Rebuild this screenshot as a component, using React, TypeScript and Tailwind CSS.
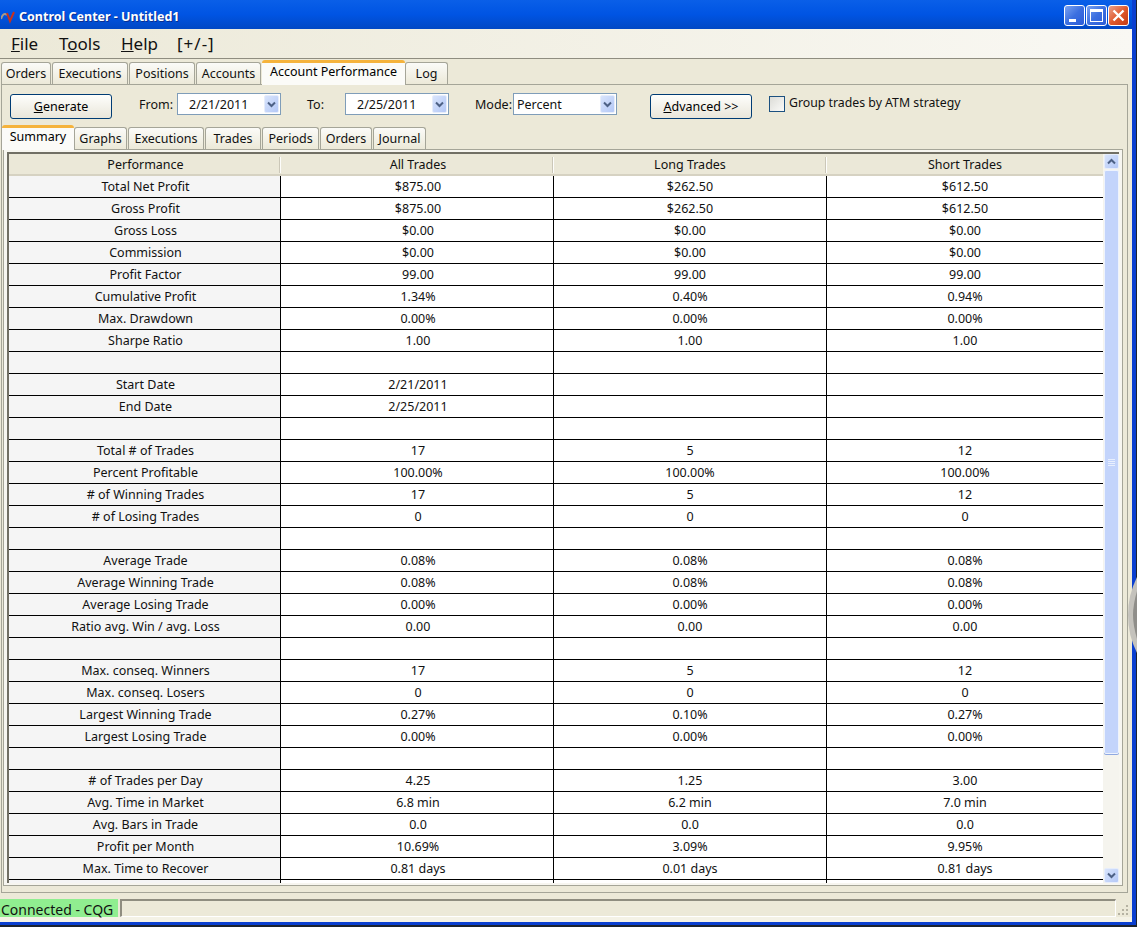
import React from 'react';

const font = 'font-[family-name:"Liberation_Sans",Arial,sans-serif]';

type Row = [string, string, string, string];

const rows: Row[] = [
  ['Total Net Profit', '$875.00', '$262.50', '$612.50'],
  ['Gross Profit', '$875.00', '$262.50', '$612.50'],
  ['Gross Loss', '$0.00', '$0.00', '$0.00'],
  ['Commission', '$0.00', '$0.00', '$0.00'],
  ['Profit Factor', '99.00', '99.00', '99.00'],
  ['Cumulative Profit', '1.34%', '0.40%', '0.94%'],
  ['Max. Drawdown', '0.00%', '0.00%', '0.00%'],
  ['Sharpe Ratio', '1.00', '1.00', '1.00'],
  ['', '', '', ''],
  ['Start Date', '2/21/2011', '', ''],
  ['End Date', '2/25/2011', '', ''],
  ['', '', '', ''],
  ['Total # of Trades', '17', '5', '12'],
  ['Percent Profitable', '100.00%', '100.00%', '100.00%'],
  ['# of Winning Trades', '17', '5', '12'],
  ['# of Losing Trades', '0', '0', '0'],
  ['', '', '', ''],
  ['Average Trade', '0.08%', '0.08%', '0.08%'],
  ['Average Winning Trade', '0.08%', '0.08%', '0.08%'],
  ['Average Losing Trade', '0.00%', '0.00%', '0.00%'],
  ['Ratio avg. Win / avg. Loss', '0.00', '0.00', '0.00'],
  ['', '', '', ''],
  ['Max. conseq. Winners', '17', '5', '12'],
  ['Max. conseq. Losers', '0', '0', '0'],
  ['Largest Winning Trade', '0.27%', '0.10%', '0.27%'],
  ['Largest Losing Trade', '0.00%', '0.00%', '0.00%'],
  ['', '', '', ''],
  ['# of Trades per Day', '4.25', '1.25', '3.00'],
  ['Avg. Time in Market', '6.8 min', '6.2 min', '7.0 min'],
  ['Avg. Bars in Trade', '0.0', '0.0', '0.0'],
  ['Profit per Month', '10.69%', '3.09%', '9.95%'],
  ['Max. Time to Recover', '0.81 days', '0.01 days', '0.81 days'],
];

const mainTabs = [
  { label: 'Orders', w: 'w-[51px]' },
  { label: 'Executions', w: 'w-[77px]' },
  { label: 'Positions', w: 'w-[67px]' },
  { label: 'Accounts', w: 'w-[66px]' },
  { label: 'Account Performance', w: 'w-[143px]', active: true },
  { label: 'Log', w: 'w-[44px]' },
];

const subTabs = [
  { label: 'Summary', w: 'w-[72px]', active: true },
  { label: 'Graphs', w: 'w-[54px]' },
  { label: 'Executions', w: 'w-[77px]' },
  { label: 'Trades', w: 'w-[57px]' },
  { label: 'Periods', w: 'w-[58px]' },
  { label: 'Orders', w: 'w-[53px]' },
  { label: 'Journal', w: 'w-[54px]' },
];

function Chevron({ up = false }: { up?: boolean }) {
  return (
    <svg width="9" height="7" viewBox="0 0 9 7" className={up ? 'rotate-180' : ''}>
      <path d="M1 1.5 L4.5 5 L8 1.5" fill="none" stroke="#4d6185" strokeWidth="2" />
    </svg>
  );
}

function ArrowBox({ className = '', up = false }: { className?: string; up?: boolean }) {
  return (
    <div className={`flex items-center justify-center rounded-[2px] border border-[#e6edfb] bg-gradient-to-br from-[#d8e4fc] to-[#b4c8f6] ${className}`}>
      <Chevron up={up} />
    </div>
  );
}

function Tab({ label, w, active, h }: { label: string; w: string; active?: boolean; h: string }) {
  if (active) {
    return (
      <div className={`${w} ${h} relative z-10 mb-[-1px] flex items-start justify-center rounded-t-[3px] border-t-[3px] border-[#f5b33c] bg-[#fbfbf8] pt-[1px] text-[12.5px] leading-[15px] text-black`}>
        {label}
      </div>
    );
  }
  return (
    <div className={`${w} h-[22px] pr-[1px]`}>
      <div className="flex h-full items-center justify-center rounded-t-[3px] border border-b-0 border-[#a5a598] bg-gradient-to-b from-[#fbfbf8] to-[#ece9d8] pt-[1px] text-[12.5px] text-[#111]">
        {label}
      </div>
    </div>
  );
}

function XpButton({ w, children }: { w: string; children: React.ReactNode }) {
  return (
    <div className={`${w} h-[25px] flex items-center justify-center rounded-[3px] border border-[#003c74] bg-gradient-to-b from-[#fefefc] to-[#e9e6da] pt-[1px] text-[12.5px] text-black`}>
      {children}
    </div>
  );
}

function Combo({ w, value, left }: { w: string; value: string; left: string }) {
  return (
    <div className={`${w} h-[22px] flex items-center justify-between border border-[#7f9db9] bg-white pr-[1px] text-[12.5px]`}>
      <span className={`${left} pt-[3px]`}>{value}</span>
      <ArrowBox className="h-[18px] w-[15px]" />
    </div>
  );
}

function Cell({ children, first, last, shift }: { children?: React.ReactNode; first?: boolean; last?: boolean; shift?: boolean }) {
  return (
    <div className={`flex h-[22px] items-center justify-center border-b border-black pt-[1px] text-[12.5px] text-[#111] ${first ? 'bg-[#f5f5f5]' : 'bg-white'} ${last ? '' : 'border-r'} ${shift ? 'pl-[2px]' : ''}`}>
      {children}
    </div>
  );
}

function Scrollbar() {
  return (
    <div className="flex w-[16px] shrink-0 flex-col bg-[#f5f4ee] pl-[1px]">
      <ArrowBox up className="h-[15px] w-[15px]" />
      <div className="mt-[1px] flex h-[584px] w-[15px] flex-col items-center justify-center gap-[1px] rounded-[2px] border border-[#eef3fd] bg-[#c3d4fb] shadow-[0_1px_0_#8fa8e0]">
        <div className="h-[1px] w-[7px] bg-[#e8effd]" />
        <div className="h-[1px] w-[7px] bg-[#e8effd]" />
        <div className="h-[1px] w-[7px] bg-[#e8effd]" />
        <div className="h-[1px] w-[7px] bg-[#e8effd]" />
      </div>
      <div className="flex-1" />
      <ArrowBox className="h-[15px] w-[15px]" />
    </div>
  );
}

function SummaryGrid() {
  return (
    <div className="flex h-[731px] overflow-hidden border-l-2 border-t-2 border-[#716f64] bg-white">
      <div className="w-[1094px] shrink-0 overflow-hidden">
        <div className="grid h-[22px] grid-cols-[272px_273px_273px_276px] border-b-2 border-[#d6d2c2] bg-[#ebe8d8] pt-[2px] text-[12.5px] text-[#111]">
          {['Performance', 'All Trades', 'Long Trades', 'Short Trades'].map((h, i) => (
            <div key={h} className="flex items-center justify-center">
              <span className={`flex-1 text-center ${i < 2 ? 'pl-[2px]' : ''}`}>{h}</span>
              {i < 3 && <span className="h-[16px] w-[1px] bg-[#fdfdfb] shadow-[-1px_0_0_#cbc7b8]" />}
            </div>
          ))}
        </div>
        <div className="grid grid-cols-[272px_273px_273px_276px]">
          {[...rows, ['', '', '', ''] as Row].map((r, i) => (
            <React.Fragment key={i}>
              <Cell first shift>{r[0]}</Cell>
              <Cell shift>{r[1]}</Cell>
              <Cell>{r[2]}</Cell>
              <Cell last>{r[3]}</Cell>
            </React.Fragment>
          ))}
        </div>
      </div>
      <Scrollbar />
    </div>
  );
}

function WindowButton({ kind }: { kind: 'min' | 'max' | 'close' }) {
  const bg = kind === 'close' ? 'from-[#e8a08a] via-[#e05a2c] to-[#c23a12]' : 'from-[#7ba2f0] via-[#3c6fe0] to-[#2a5bd8]';
  return (
    <div className={`relative h-[21px] w-[21px] rounded-[3px] border border-white bg-gradient-to-br ${bg}`}>
      {kind === 'min' && <div className="absolute bottom-[3px] left-[4px] h-[3px] w-[7px] bg-white" />}
      {kind === 'max' && <div className="absolute left-[3px] top-[3px] h-[13px] w-[13px] border border-t-[3px] border-white" />}
      {kind === 'close' && (
        <svg className="absolute left-[3px] top-[3px]" width="13" height="13" viewBox="0 0 13 13">
          <path d="M1.5 1.5 L11.5 11.5 M11.5 1.5 L1.5 11.5" stroke="#fff" strokeWidth="2.4" />
        </svg>
      )}
    </div>
  );
}

function ResizeGrip() {
  return (
    <svg width="12" height="12" viewBox="0 0 12 12" className="absolute bottom-[0px] right-[2px]">
      <path d="M8 0h2v2H8zM8 4h2v2H8zM4 4h2v2H4zM8 8h2v2H8zM4 8h2v2H4zM0 8h2v2H0z" fill="#b5b2a2" />
    </svg>
  );
}

export default function App() {
  return (
    <div className={`${font} relative flex h-[927px] w-[1137px] flex-col overflow-hidden bg-[#1c2430]`}>
      <div className="flex h-[925px] w-[1136px] flex-col border-b-[3px] border-r-4 border-[#0a3fd0] bg-[#ece9d8]">
        {/* title bar */}
        <div className="flex h-[29px] shrink-0 items-center bg-gradient-to-b from-[#0a5fe8] via-[#0054e3] to-[#0148c4] pr-[3px] pt-[2px]">
          <svg width="15" height="14" viewBox="0 0 15 14" className="ml-[1px] mt-[2px]">
            <path d="M0 9 Q2 2 6 5" fill="none" stroke="#a89a88" strokeWidth="2" />
            <path d="M6 3 L9 11 L13 2" fill="none" stroke="#c8321e" strokeWidth="2" />
          </svg>
          <span className="ml-[3px] mt-[4px] text-[12.5px] font-bold text-white [text-shadow:1px_1px_0_#0a2f90]">Control Center - Untitled1</span>
          <div className="ml-auto flex gap-[1px]">
            <WindowButton kind="min" />
            <WindowButton kind="max" />
            <WindowButton kind="close" />
          </div>
        </div>

        {/* menu */}
        <div className="flex h-[30px] shrink-0 items-center border-b border-[#8f8d80] bg-gradient-to-r from-[#ece9d8] to-[#f9f8f3] pl-[11px] text-[17px] text-[#111]">
          <span className="w-[48px]"><u>F</u>ile</span>
          <span className="w-[62px]">T<u>o</u>ols</span>
          <span className="w-[56px]"><u>H</u>elp</span>
          <span className="tracking-[1px]">[+/-]</span>
        </div>

        {/* main tabs */}
        <div className="relative z-10 flex h-[25px] shrink-0 items-end pl-[1px]">
          {mainTabs.map((t) => (
            <Tab key={t.label} label={t.label} w={t.w} active={t.active} h="h-[25px]" />
          ))}
        </div>

        <div className="ml-[1px] mr-[4px] flex h-[809px] shrink-0 flex-col border border-[#a5a598] pl-[1px]">
          {/* toolbar */}
          <div className="flex h-[40px] shrink-0 items-start pl-[7px] pt-[9px] text-[12.5px] text-[#111]">
            <XpButton w="w-[102px]"><span><u>G</u>enerate</span></XpButton>
            <span className="ml-[27px] mt-[2px] w-[38px]">From:</span>
            <div className="-mt-[1px]"><Combo w="w-[104px]" value="2/21/2011" left="pl-[11px]" /></div>
            <span className="ml-[26px] mt-[2px] w-[38px]">To:</span>
            <div className="-mt-[1px]"><Combo w="w-[104px]" value="2/25/2011" left="pl-[11px]" /></div>
            <span className="ml-[26px] mt-[2px] w-[38px]">Mode:</span>
            <div className="-mt-[1px]"><Combo w="w-[104px]" value="Percent" left="pl-[3px]" /></div>
            <div className="ml-[33px]"><XpButton w="w-[102px]"><span><u>A</u>dvanced &gt;&gt;</span></XpButton></div>
            <div className="ml-[17px] mt-[2px] h-[16px] w-[16px] border border-[#1c5180] bg-gradient-to-br from-[#dcdcd7] to-[#fbfbf9]" />
            <span className="ml-[4px] text-[12.3px]">Group trades by ATM strategy</span>
          </div>

          {/* summary tabs */}
          <div className="relative z-10 -ml-[1px] flex h-[24px] shrink-0 items-end">
            {subTabs.map((t) => (
              <Tab key={t.label} label={t.label} w={t.w} active={t.active} h="h-[25px]" />
            ))}
          </div>

          <div className="mr-[4px] border border-[#a5a598] bg-[#f7f6f0] py-[2px] pl-[3px] pr-[3px]">
            <SummaryGrid />
          </div>
        </div>

        {/* status bar */}
        <div className="relative mt-[6px] flex h-[18px] shrink-0 items-stretch text-[14px] text-[#111]">
          <div className="flex w-[118px] items-center bg-[#90ee90] pl-[1px] pt-[3px]">Connected - CQG</div>
          <div className="ml-[2px] mr-[16px] flex-1 border-l-2 border-t-2 border-[#8f8d80] border-b border-r border-b-white border-r-white" />
          <ResizeGrip />
        </div>
        <div className="h-[5px] shrink-0 bg-[#f4f2e6]" />
      </div>
      {/* grey arc from a shape sitting over the window edge */}
      <svg className="absolute left-[1126px] top-[575px]" width="11" height="80" viewBox="0 0 11 80">
        <path d="M11 2 Q2 20 2 40 Q2 60 11 78 Z" fill="#c4c2bc" />
        <path d="M11 16 Q7 30 7 40 Q7 50 11 64 Z" fill="#8f8e8a" />
      </svg>
    </div>
  );
}
